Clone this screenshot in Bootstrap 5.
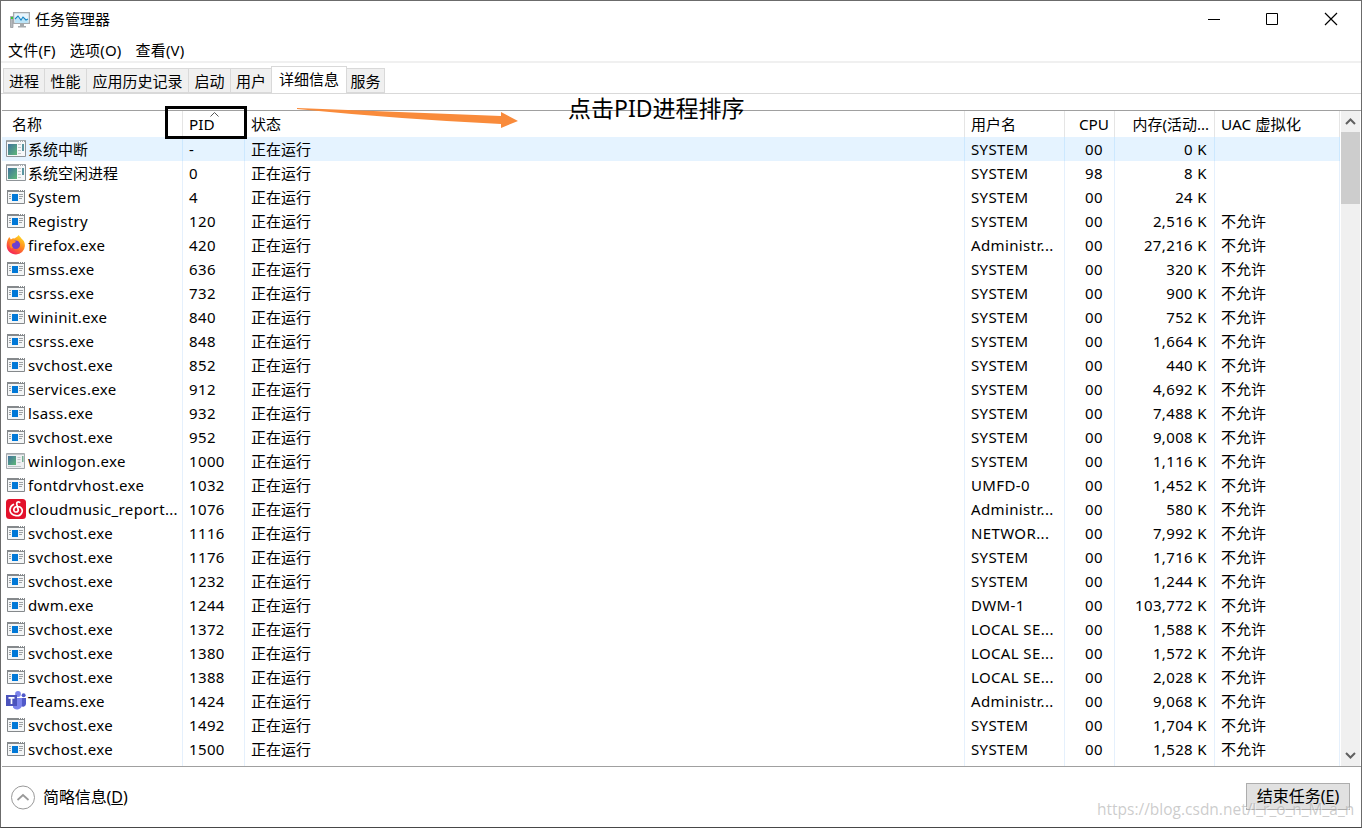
<!DOCTYPE html>
<html lang="zh-CN">
<head>
<meta charset="utf-8">
<meta name="viewport" content="width=device-width, initial-scale=1">
<title>任务管理器</title>
<link href="https://cdn.jsdelivr.net/npm/bootstrap@5.3.0/dist/css/bootstrap.min.css" rel="stylesheet">
<style>
body{font-family:"Noto Sans","Noto Sans CJK SC",sans-serif;font-size:15px;line-height:20px;color:#000;background:#fff;overflow:hidden}
.tm-window{width:1362px;height:828px;border:1px solid #6b6b6b;border-bottom-color:#484848}
.tm-title{height:37px;padding-left:9px}
.tm-title span{margin-left:1px;padding-bottom:1px}
.tm-caption-btns{gap:43px;padding-right:23px}
.tm-menu{height:23px;padding-left:7px;gap:14px;line-height:24px;letter-spacing:.2px}
.tm-rule{height:2px;background:#f0f0f0}
.tm-tabs{height:31px;padding-left:2px;border-bottom:1px solid #d9d9d9}
.tm-tab{height:25px;background:#f0f0f0;border:1px solid #d9d9d9;border-right:0;line-height:24px;text-align:center;white-space:nowrap}
.tm-tab.tm-on{height:28px;background:#fff;margin-bottom:-1px;border-right:1px solid #d9d9d9;line-height:25px}
.tm-tab:last-child{border-left:0;border-right:1px solid #d9d9d9}
.tm-gap{height:16px}
.tm-list{height:657px;border-top:1px solid #a0a0a0;border-bottom:1px solid #a0a0a0;margin-left:1px}
.tm-grid{width:1338px;margin-right:1px}
.tm-row{display:grid;grid-template-columns:181px 62px 720px 100px 50px 100px 125px;height:24px;line-height:24px}
.tm-row>div{border-right:1px solid #e5f0fc;padding-left:6px;white-space:nowrap;overflow:hidden}
.tm-row .tm-num{text-align:right;padding-right:7px;padding-left:0}
.tm-row .tm-cpu{padding-right:11px}
.tm-lat{letter-spacing:.37px}
.tm-name.tm-lat{letter-spacing:.34px}
.tm-row.tm-head{height:26px;line-height:26px}
.tm-head>div{border-color:#e5e5e5}
.tm-head>div:first-child{padding-left:10px}
.tm-head .tm-num,.tm-head .tm-cpu{padding-right:5px}
.tm-head .tm-lat{font-size:15.3px;letter-spacing:0}
.tm-row.tm-tail{height:5px}
.tm-hot{background:#e5f3ff}
.tm-hot>div{border-color:#cce8ff}
.tm-row .tm-name{padding-left:4px;display:flex;align-items:center}
.tm-name svg{flex:none;margin-right:2px}
.tm-scroll{width:19px;background:#f0f0f0}
.tm-thumb{height:72px;background:#cdcdcd}
.tm-foot{height:59px;font-size:16px;padding:0 11px 0 9px}
.tm-foot>div:first-child{letter-spacing:-.1px}
.tm-foot svg{margin-top:1px}
.tm-end{width:104px;height:27px;background:#e1e1e1;border:1px solid #adadad;line-height:25px;text-align:center}
.tm-box{left:165px;top:106px;width:82px;height:33px;border:3px solid #000}
.tm-sort{left:209px;top:111px}
.tm-arrow{left:295px;top:104px}
.tm-note{left:568px;top:93px;font-size:23px;line-height:30px;white-space:nowrap}
.tm-water{left:1097px;top:799px;font:15.5px/20px "Open Sans",sans-serif;color:rgba(170,170,170,.6);text-shadow:1px 1px 0 rgba(255,255,255,.6);white-space:nowrap}
</style>
</head>
<body>
<svg class="position-absolute" width="0" height="0">
  <defs>
    <linearGradient id="g-sys" x2="1" y2="1"><stop stop-color="#41729e"/><stop offset="1" stop-color="#5fb878"/></linearGradient>
    <linearGradient id="g-fox" x1=".8" y1="0" x2=".2" y2="1"><stop stop-color="#ffe226"/><stop offset=".45" stop-color="#ff8a1f"/><stop offset="1" stop-color="#f5165e"/></linearGradient>
    <symbol id="i-exe" viewBox="0 0 20 20"><path fill="#f4f6f7" stroke="#85898c" d="M1.500 3.500h17v13h-17z"/><path fill="#85898c" d="M1 3h18v2H1z"/><path fill="#fff" d="M13 3h1v1h-1zM15 3h1v1h-1zM17 3h1v1h-1z"/><path fill="#0078d7" d="M6 7h6v7H6z"/><path stroke="#9da1a4" d="M3 7.500h2M3 9.500h2M3 11.500h2M13 7.500h4M13 9.500h4M13 11.500h3"/></symbol>
    <symbol id="i-sys" viewBox="0 0 20 20"><path fill="#f7f8f9" stroke="#8f9498" d="M.5 1.500h19v16H.5z"/><path fill="#a3a8ab" d="M1 1h18v2H1z"/><path fill="#fff" d="M13 2h1v1h-1zM15 2h1v1h-1zM17 2h1v1h-1z"/><path fill="url(#g-sys)" d="M2 5h9v11H2z"/><path fill="#5a95a0" d="M16 5h2v7h-2z"/><path stroke="#c4c8ca" d="M12 5.500h3M12 8.500h3M12 11.500h3M12 14.500h3"/></symbol>
    <symbol id="i-win" viewBox="0 0 20 20"><path fill="#eef0f2" stroke="#a4a9ad" d="M.5 2.500h18v15H.5z"/><path fill="#c2c6c8" d="M1 3h17v1H1z"/><path fill="url(#g-sys)" d="M2 5h8v9H2z"/><path stroke="#c0c5c8" d="M11.500 6.500h3M11.500 8.500h3M11.500 11.500h3M2 15.500h13"/><path fill="#72ad91" d="M16 5h1.500v6H16z"/></symbol>
    <symbol id="i-fox" viewBox="0 0 20 20"><path fill="url(#g-fox)" d="M2 4.200 3.200 2l1.700 2.500L7 3.300l1.300.2C10 2.500 11.500 1.800 12.500 0c2 2.100 2.600 3.300 4.200 4.800C18.500 6.500 19 8.700 18.900 11A9 9 0 0 1 10 19.500C5 19.500.7 16 .7 10.800.7 8 1.200 5.800 2 4.200z"/><circle cx="9.800" cy="9.800" r="4.300" fill="#6a3fd0"/><path fill="#ff8a24" d="M4 6.500c2-1.400 4.600-1 6 .3L8.700 7.800 6.500 8.500c-.9 1.500-.6 3.200.6 4.300l-2 .7C3.500 11.500 3.200 8.700 4 6.500z"/></symbol>
    <symbol id="i-music" viewBox="0 0 20 20"><rect width="20" height="20" rx="3.500" fill="#e3122b"/><path fill="none" stroke="#fff" stroke-width="1.700" stroke-linecap="round" d="M13.600 3.300c-1.800-.9-3.200.1-2.800 1.900l1.400 5.500c.5 2.800-4.200 3.200-4.400.3-.1-2.400 2-3.700 4.200-3.500 3 .2 4.700 2.500 4.100 5.200C15.300 15.600 12.700 17 10 16.700 6.300 16.400 3.700 13.700 4 10.400c.2-2.300 1.500-4 3.400-5"/></symbol>
    <symbol id="i-teams" viewBox="0 0 20 20"><circle cx="17.600" cy="4.300" r="2" fill="#5059c9"/><path fill="#5059c9" d="M14 7h6v6a3 3 0 0 1-5 2z"/><circle cx="12" cy="3" r="2.900" fill="#7b83eb"/><path fill="#7b83eb" d="M7 7h9v6.500a5 5 0 0 1-9 3z"/><path fill="#4b53bc" d="M0 4h11v11H0z"/><path stroke="#fff" stroke-width="1.700" d="M2.500 6.800h6M5.500 6.800V13"/></symbol>
  </defs>
</svg>

<div class="tm-window d-flex flex-column">
  <header class="tm-title d-flex align-items-center justify-content-between">
    <div class="d-flex align-items-center">
      <svg width="20" height="18" viewBox="0 0 20 18" class="me-1"><path fill="#b6babd" stroke="#8c9195" stroke-width=".7" d="M.5 5.500h2.500v11H.5z"/><path fill="#36c832" d="M1 6h2v2H1z"/><path fill="#e7f5fd" stroke="#a5aaad" stroke-width="1.300" d="M3.600 1.600h15.800v10.800H3.600z"/><path fill="#bce4f7" d="M5 8l3-2 3 3 2-2 5 2v3H5z"/><path fill="none" stroke="#1686c5" stroke-width="1.100" d="M5 8l3-3 3 4 2-3 3 3 2-1"/><path fill="#a5aaad" d="M10 13h4v2h2v1.500H8V15h2z"/></svg>
      <span>任务管理器</span>
    </div>
    <div class="tm-caption-btns d-flex align-items-center">
      <svg width="15" height="15" stroke="#000" fill="none"><path d="M1 7.500h12"/></svg>
      <svg width="15" height="15" stroke="#000" fill="none"><path d="M1.500 1.500h11v11h-11z"/></svg>
      <svg width="15" height="15" stroke="#000" fill="none" stroke-width="1.200"><path d="M2 1l12 12M14 1l-12 12"/></svg>
    </div>
  </header>
  <nav class="tm-menu d-flex"><span>文件(F)</span><span>选项(O)</span><span>查看(V)</span></nav>
  <div class="tm-rule"></div>
  <div class="tm-tabs d-flex align-items-end" id="tabs"></div>
  <div class="tm-gap"></div>
  <main class="tm-list d-flex">
    <div class="tm-grid">
      <div class="tm-row tm-head"><div>名称</div><div class="tm-lat">PID</div><div>状态</div><div>用户名</div><div class="tm-num tm-cpu tm-lat">CPU</div><div class="tm-num">内存(活动...</div><div class="tm-lat">UAC 虚拟化</div></div>
      <div id="rows"></div>
      <div class="tm-row tm-tail" aria-hidden="true"><div></div><div></div><div></div><div></div><div></div><div></div><div></div></div>
    </div>
    <div class="tm-scroll d-flex flex-column">
      <svg width="19" height="21" fill="none" stroke="#606060" stroke-width="2"><path d="M5 13l4.500-4.500L14 13"/></svg>
      <div class="tm-thumb"></div>
      <svg width="19" height="21" class="mt-auto" fill="none" stroke="#606060" stroke-width="2"><path d="M5 8l4.500 4.500L14 8"/></svg>
    </div>
  </main>
  <footer class="tm-foot d-flex align-items-center justify-content-between">
    <div class="d-flex align-items-center"><svg width="25" height="25" fill="none" stroke="#999" class="me-2"><circle cx="13" cy="12.500" r="11.500"/><path stroke-width="1.700" d="M7.500 15l5.500-5 5.500 5"/></svg><span>简略信息(<u>D</u>)</span></div>
    <div class="tm-end">结束任务(<u>E</u>)</div>
  </footer>
</div>

<div class="tm-box position-absolute"></div>
<svg class="tm-sort position-absolute" width="12" height="7" fill="none" stroke="#555"><path d="M1.500 5.500L5.500 1.500 9.500 5.500"/></svg>
<svg class="tm-arrow position-absolute" width="226" height="28"><path fill="#f98b3b" d="M2 4L206 12 206 8 223 17 206 24 206 20Q110 15.500 2 5z"/></svg>
<div class="tm-note position-absolute">点击PID进程排序</div>
<div class="tm-water position-absolute">https://blog.csdn.net/l_r_o_n_M_a_n</div>

<script src="https://cdn.jsdelivr.net/npm/bootstrap@5.3.0/dist/js/bootstrap.bundle.min.js"></script>
<script>
const tabs = [['进程',41],['性能',42],['应用历史记录',102],['启动',42],['用户',41],['详细信息',76],['服务',38]];
document.getElementById('tabs').innerHTML = tabs.map(([t,w],i) =>
  `<div class="tm-tab${i===5?' tm-on':''}" style="width:${w}px">${t}</div>`).join('');

const S='SYSTEM', A='Administr...', L='LOCAL SE...', N='不允许';
const data = [
 ['sys','系统中断','-',S,'00','0',''],['sys','系统空闲进程','0',S,'98','8',''],
 ['exe','System','4',S,'00','24',''],['exe','Registry','120',S,'00','2,516',N],
 ['fox','firefox.exe','420',A,'00','27,216',N],['exe','smss.exe','636',S,'00','320',N],
 ['exe','csrss.exe','732',S,'00','900',N],['exe','wininit.exe','840',S,'00','752',N],
 ['exe','csrss.exe','848',S,'00','1,664',N],['exe','svchost.exe','852',S,'00','440',N],
 ['exe','services.exe','912',S,'00','4,692',N],['exe','lsass.exe','932',S,'00','7,488',N],
 ['exe','svchost.exe','952',S,'00','9,008',N],['win','winlogon.exe','1000',S,'00','1,116',N],
 ['exe','fontdrvhost.exe','1032','UMFD-0','00','1,452',N],['music','cloudmusic_report...','1076',A,'00','580',N],
 ['exe','svchost.exe','1116','NETWOR...','00','7,992',N],['exe','svchost.exe','1176',S,'00','1,716',N],
 ['exe','svchost.exe','1232',S,'00','1,244',N],['exe','dwm.exe','1244','DWM-1','00','103,772',N],
 ['exe','svchost.exe','1372',L,'00','1,588',N],['exe','svchost.exe','1380',L,'00','1,572',N],
 ['exe','svchost.exe','1388',L,'00','2,028',N],['teams','Teams.exe','1424',A,'00','9,068',N],
 ['exe','svchost.exe','1492',S,'00','1,704',N],['exe','svchost.exe','1500',S,'00','1,528',N]];
document.getElementById('rows').innerHTML = data.map(([ic,n,p,u,c,m,v],i) => `
<div class="tm-row${i===0?' tm-hot':''}">
<div class="tm-name${i>1?' tm-lat':''}"><svg width="20" height="20"><use href="#i-${ic}"/></svg><span>${n}</span></div>
<div class="tm-lat">${p}</div><div>正在运行</div><div class="tm-lat">${u}</div>
<div class="tm-lat tm-num tm-cpu">${c}</div><div class="tm-lat tm-num">${m} K</div><div>${v}</div></div>`).join('');
</script>
</body>
</html>
